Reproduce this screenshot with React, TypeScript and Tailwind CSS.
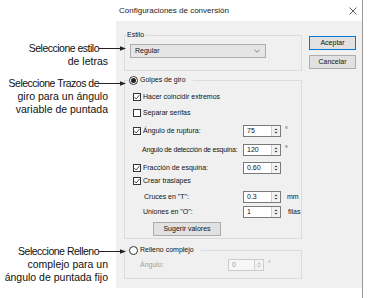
import React from "react";

const Arrow = () => (
  <svg width="27" height="7" viewBox="0 0 27 7" className="relative z-10 shrink-0">
    <line x1="0" y1="3.5" x2="22" y2="3.5" stroke="#222" strokeWidth="1" />
    <path d="M21 1.2 L27 3.5 L21 5.8 Z" fill="#222" />
  </svg>
);

function Note({ lines, className = "" }: { lines: string[]; className?: string }) {
  return (
    <div className={"flex flex-col " + className}>
      <div className="flex items-center justify-end h-[13px] mr-[-10px]">
        <span className="tracking-[-0.5px] whitespace-nowrap leading-[13px]">{lines[0]}</span>
        <Arrow />
      </div>
      {lines.slice(1).map((l) => (
        <div key={l} className="h-[13px] leading-[13px] text-right pr-[8px] whitespace-nowrap">
          {l}
        </div>
      ))}
    </div>
  );
}

const Check = ({ on }: { on: boolean }) => (
  <span className="w-[8px] h-[8px] border border-[#333333] bg-white flex items-center justify-center shrink-0">
    {on && (
      <svg width="6" height="6" viewBox="0 0 6 6">
        <path d="M0.4 3.1 L2.2 5 L5.6 0.8" stroke="#222" strokeWidth="0.8" fill="none" />
      </svg>
    )}
  </span>
);

const Radio = ({ on }: { on: boolean }) => (
  <span className="w-[9px] h-[9px] rounded-full border border-[#333333] bg-white flex items-center justify-center shrink-0">
    {on && <span className="w-[5px] h-[5px] rounded-full bg-[#222222]" />}
  </span>
);

function Spin({ v, disabled }: { v: string; disabled?: boolean }) {
  const c = disabled ? "#b5b5b5" : "#333";
  return (
    <div
      className={
        disabled
          ? "flex h-[12px] w-[36px] border border-[#cccccc] bg-[#f7f7f7]"
          : "flex h-[12px] w-[38px] border border-[#7a7a7a] bg-white"
      }
    >
      <div className={disabled ? "flex-1 pl-[3px] flex items-center text-[#a0a0a0]" : "flex-1 pl-[3px] flex items-center"}>
        {v}
      </div>
      <div className="w-[9px] flex items-center justify-center border-l border-[#d0d0d0] bg-[#f3f3f3]">
        <svg width="9" height="10" viewBox="0 0 9 10">
          <path d="M2.8 4 L4.5 2.2 L6.2 4 Z" fill={c} />
          <line x1="1" y1="5" x2="8" y2="5" stroke="#c4c4c4" strokeWidth="0.6" />
          <path d="M2.8 6 L4.5 7.8 L6.2 6 Z" fill={c} />
        </svg>
      </div>
    </div>
  );
}

export default function App() {
  return (
    <div className="w-[371px] h-[298px] bg-white flex overflow-hidden font-['Liberation_Sans',Arial,sans-serif] text-black">
      <div className="w-[116px] shrink-0 flex flex-col pt-[42px] text-[10.5px] text-[#111]">
        <Note lines={["Seleccione estilo", "de letras"]} />
        <Note className="mt-[9px]" lines={["Seleccione Trazos de", "giro para un ángulo", "variable de puntada"]} />
        <Note className="mt-[129px]" lines={["Seleccione Relleno", "complejo para un", "ángulo de puntada fijo"]} />
      </div>

      <div className="w-[247px] shrink-0 flex flex-col border-r border-[#9a9a9a]">
        <div className="h-[21px] shrink-0 flex items-center pl-[3px] pr-[5px] text-[8px] text-[#222]">
          <span className="flex-1">Configuraciones de conversión</span>
          <svg width="8" height="8" viewBox="0 0 8 8">
            <path d="M0.5 0.5 L7.5 7.5 M7.5 0.5 L0.5 7.5" stroke="#333" strokeWidth="0.8" />
          </svg>
        </div>

        <div className="h-[267px] shrink-0 bg-[#f0f0f0] flex pl-[8px] pt-[9px] text-[7px] text-[#111]">
          <div className="w-[178px] flex flex-col">
            <fieldset className="border border-[#dcdcdc] pl-[5px] pr-0 pt-0 pb-[12px] m-0">
              <legend className="h-[10px] leading-[10px] px-[1px] ml-[-4px]">Estilo</legend>
              <div className="mt-[4px] h-[14px] w-[136px] border border-[#adadad] bg-[#e5e5e5] flex items-center pl-[4px] pr-[5px]">
                <span className="flex-1">Regular</span>
                <svg width="6" height="4" viewBox="0 0 6 4">
                  <path d="M0.5 0.8 L3 3.2 L5.5 0.8" stroke="#555" strokeWidth="0.7" fill="none" />
                </svg>
              </div>
            </fieldset>

            <fieldset className="mt-[4px] border border-[#dcdcdc] pl-[5px] pr-0 pt-0 pb-[2px] m-0">
              <legend className="h-[10px] w-[64px] ml-[-1px] p-0">
                <span className="flex items-center h-[10px] gap-[2px]">
                  <Radio on={true} />
                  <span>Golpes de giro</span>
                </span>
              </legend>
              <div className="flex flex-col">
                <div className="mt-[6px] h-[12px] flex items-center ml-[3px] gap-[2px]">
                  <Check on={true} />
                  <span>Hacer coincidir extremos</span>
                </div>
                <div className="mt-[4px] h-[12px] flex items-center ml-[3px] gap-[2px]">
                  <Check on={false} />
                  <span>Separar serifas</span>
                </div>
                <div className="mt-[6px] h-[12px] flex items-center">
                  <div className="w-[113px] flex items-center pl-[3px] gap-[2px]">
                    <Check on={true} />
                    <span>Ángulo de ruptura:</span>
                  </div>
                  <Spin v="75" />
                  <span className="ml-[4px] self-start">°</span>
                </div>
                <div className="mt-[7px] h-[12px] flex items-center">
                  <div className="w-[113px] shrink-0 pl-[12px] whitespace-nowrap tracking-[-0.2px] overflow-hidden">
                    Angulo de detección de esquina:
                  </div>
                  <Spin v="120" />
                  <span className="ml-[4px] self-start">°</span>
                </div>
                <div className="mt-[6px] h-[12px] flex items-center">
                  <div className="w-[113px] flex items-center pl-[3px] gap-[2px]">
                    <Check on={true} />
                    <span>Fracción de esquina:</span>
                  </div>
                  <Spin v="0.60" />
                </div>
                <div className="mt-[1px] h-[12px] flex items-center ml-[3px] gap-[2px]">
                  <Check on={true} />
                  <span>Crear traslapes</span>
                </div>
                <div className="mt-[4px] h-[12px] flex items-center">
                  <div className="w-[113px] pl-[14px]">Cruces en "T":</div>
                  <Spin v="0.3" />
                  <span className="ml-[6px]">mm</span>
                </div>
                <div className="mt-[3px] h-[12px] flex items-center">
                  <div className="w-[113px] pl-[13px]">Uniones en "O":</div>
                  <Spin v="1" />
                  <span className="ml-[7px] whitespace-nowrap">filas</span>
                </div>
                <div className="mt-[4px] ml-[23px] h-[14px] w-[68px] border border-[#adadad] bg-[#e1e1e1] flex items-center justify-center">
                  Sugerir valores
                </div>
              </div>
            </fieldset>

            <fieldset className="mt-[6px] border border-[#dcdcdc] pl-[5px] pr-0 pt-0 pb-[7px] m-0">
              <legend className="h-[10px] w-[72px] ml-[-1px] p-0">
                <span className="flex items-center h-[10px] gap-[2px]">
                  <Radio on={false} />
                  <span>Relleno complejo</span>
                </span>
              </legend>
              <div className="mt-[4px] h-[12px] flex items-center">
                <div className="w-[98px] pl-[10px] text-[#a0a0a0]">Ángulo:</div>
                <Spin v="0" disabled />
                <span className="ml-[4px] self-start text-[#a0a0a0]">°</span>
              </div>
            </fieldset>
          </div>

          <div className="ml-[7px] w-[47px] flex flex-col">
            <div className="mt-[6px] h-[14px] border border-[#0078d7] bg-[#e1e1e1] flex items-center justify-center">
              Aceptar
            </div>
            <div className="mt-[5px] h-[14px] border border-[#adadad] bg-[#e1e1e1] flex items-center justify-center">
              Cancelar
            </div>
          </div>
        </div>

        <div className="flex-1 bg-white" />
      </div>
    </div>
  );
}
